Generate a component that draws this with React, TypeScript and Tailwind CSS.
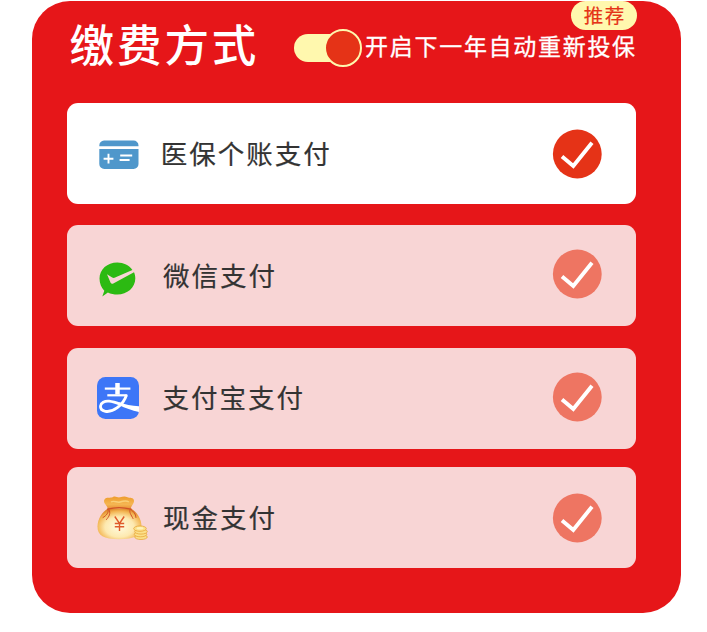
import React, { useState } from 'react';

interface PayMethod {
  id: string;
  label: string;
  icon: React.ReactNode;
  // Feinabstände je Zeile
  rowClass: string;
  iconClass: string;
  labelClass: string;
  checkClass: string;
}

const InsuranceCardIcon = () => (
  <svg width="40" height="29" viewBox="0 0 40 29">
    <path d="M5 0.5h29.5a5 5 0 0 1 5 5V6.2H0.3V5.5a5 5 0 0 1 4.7-5z" fill="#4f97cb" />
    <path d="M0.3 9h39.2v14.900a5 5 0 0 1-5 5H5.3a5 5 0 0 1-5-5z" fill="#4f97cb" />
    <path d="M4.6 18.700h9.800M9.500 13.800v9.800" stroke="#fff" strokeWidth="1.900" />
    <path d="M21.200 15.500h12M20.600 20h10" stroke="#fff" strokeWidth="2.100" />
  </svg>
);

const WechatPayIcon = () => (
  <svg width="37" height="35" viewBox="0 0 37 35">
    <path
      d="M18.300 0.500C8.300 0.500 0.500 7.400 0.500 16.500c0 5 2 9.300 4.800 12.200L3.300 34.500l5.600-4c2.600 1.400 6.400 2 9.400 2 10 0 18-7 18-16 0-2.300-.4-4.400-1.300-6.300L14.300 21.500c-1.200.7-2.200.2-2.700-.8L8 12.300l5.200 3.200c1 .6 1.900.6 2.900.1L33.400 7.900C30.200 3.400 24.700.5 18.300.5z"
      fill="#2cba12"
    />
  </svg>
);

const AlipayIcon = () => (
  <svg width="42" height="42" viewBox="0 0 42 42">
    <rect width="42" height="42" rx="8.500" fill="#3d76f7" />
    <g fill="none" stroke="#fff">
      <path d="M20.500 6v11.500" strokeWidth="4.500" />
      <path d="M7.800 11.600h25.600" strokeWidth="2.200" />
      <path d="M10.300 18.300h20" strokeWidth="2.200" />
      <path
        d="M29.500 18c-1.600 5-5 9.600-9.200 12.700-4 3-8.300 4.300-12 3.600-3.400-.7-5-2.900-4.800-5.300.3-3.200 4-5.200 8.600-4.800 4 .4 7.500 1.700 12 3.400"
        strokeWidth="2.800"
      />
    </g>
    <path d="M22 25.200c6 2.300 12.500 3.600 20 4v5.800c-7-1.400-14-4-20-7z" fill="#fff" />
  </svg>
);

const MoneyBagIcon = () => (
  <svg width="51" height="44" viewBox="0 0 51 44">
    <defs>
      <radialGradient id="bag" cx="0.500" cy="0.600" r="0.600">
        <stop offset="0" stopColor="#fffbdf" />
        <stop offset="0.550" stopColor="#fde9b0" />
        <stop offset="0.850" stopColor="#f3b653" />
        <stop offset="1" stopColor="#e08a2c" />
      </radialGradient>
      <linearGradient id="bagTop" x1="0" y1="0" x2="0" y2="1">
        <stop offset="0" stopColor="#ee9c2c" />
        <stop offset="0.600" stopColor="#f5b653" />
        <stop offset="1" stopColor="#e68a30" />
      </linearGradient>
    </defs>
    <path
      d="M11 12.500C5 16 0.500 23 0.500 30.500c0 9 6 12.800 21.500 12.800s22.500-3.800 22.500-12.800C44.500 23 40 16 34 12.500z"
      fill="url(#bag)"
    />
    <path
      d="M11 13.500C10.500 9 5.500 7 7.500 3.500c2-3 6-1 8.500-2.500 2.500-1.500 4.500 1 7 .3C26 .5 28 0 30.500 1.300c2 1 4.500-.2 6 2 2 3-2.500 6-3 10.200-7-1.500-15.500-1.500-22.500 0z"
      fill="url(#bagTop)"
    />
    <path d="M14 6c3-2 6 1 9 0s6-2 9 0" fill="none" stroke="#f9cf78" strokeWidth="1.500" />
    <g fill="none" stroke="#cf5227" strokeLinecap="round">
      <path d="M10.500 13.200c7-2 16-2 23.500 0" strokeWidth="1.200" />
      <path d="M11 13.500c1 3-1.500 6-5 8M12 13.500c2 4 0 7-2.500 10M33 13.500c-1 3 1 5 3 9M34 13.500c2 2 5 4 5 8" strokeWidth="1" />
    </g>
    <path d="M17.800 20.500l4.700 7 4.700-7M22.500 27v8M17.800 27.500h9.400M17.800 30.800h9.400" fill="none" stroke="#df5a2a" strokeWidth="1.400" />
    <g fill="#fbe08a" stroke="#e9a83c" strokeWidth="0.800">
      <ellipse cx="44" cy="41" rx="6.300" ry="2.500" />
      <ellipse cx="43.500" cy="38.300" rx="6.300" ry="2.500" />
      <ellipse cx="44" cy="35.600" rx="6.300" ry="2.500" />
      <ellipse cx="43" cy="32.600" rx="6.300" ry="2.700" />
    </g>
    <ellipse cx="43" cy="32.300" rx="3.500" ry="1.200" fill="#fff3ba" />
  </svg>
);

const methods: PayMethod[] = [
  {
    id: 'insurance',
    label: '医保个账支付',
    icon: <InsuranceCardIcon />,
    rowClass: '',
    iconClass: 'pl-[32px] pt-[2.500px]',
    labelClass: 'pl-[94px]',
    checkClass: 'pt-px',
  },
  {
    id: 'wechat',
    label: '微信支付',
    icon: <WechatPayIcon />,
    rowClass: 'mt-[21.100px]',
    iconClass: 'pl-[32.200px] pt-[8px]',
    labelClass: 'pl-[96.200px] pb-[2px]',
    checkClass: 'pb-[3px]',
  },
  {
    id: 'alipay',
    label: '支付宝支付',
    icon: <AlipayIcon />,
    rowClass: 'mt-[21.300px]',
    iconClass: 'pl-[30.300px]',
    labelClass: 'pl-[95.700px] pb-[2px]',
    checkClass: 'pb-[3px]',
  },
  {
    id: 'cash',
    label: '现金支付',
    icon: <MoneyBagIcon />,
    rowClass: 'mt-[18.200px]',
    iconClass: 'pl-[30.300px]',
    labelClass: 'pl-[96.200px] pb-[2px]',
    checkClass: 'pt-px',
  },
];

const CheckMark = ({ active }: { active: boolean }) => (
  <svg width="50" height="50" viewBox="0 0 50 50">
    <circle cx="25.300" cy="25" r="24.400" fill={active ? '#e53317' : '#ee7562'} />
    <path d="M10 27.500l11.300 9.500L40 13.700" fill="none" stroke="#fff" strokeWidth="3.900" />
  </svg>
);

const App: React.FC = () => {
  const [selected, setSelected] = useState('insurance');
  const [autoRenew, setAutoRenew] = useState(true);

  return (
    <div className="h-[632px] w-[707px] overflow-hidden bg-white pl-[32.400px] pt-[0.500px] font-['Noto_Sans_CJK_SC',sans-serif]">
      <div className="h-[612.700px] w-[649px] rounded-[38px] bg-[#e61619] px-[34.400px]">
        {/* Kopfzeile */}
        <div className="flex h-[102.200px]">
          <h1 className="w-[227px] shrink-0 whitespace-nowrap pl-[2.800px] pt-[12.600px] text-[44.500px] font-medium leading-[60px] tracking-[2.900px] text-white">
            缴费方式
          </h1>
          <button
            className="mt-[28px] flex h-[38px] w-[68.500px] shrink-0 items-center"
            onClick={() => setAutoRenew(!autoRenew)}
          >
            <span className={`flex h-[28px] w-[62px] items-center rounded-full bg-[#fff8ae] ${autoRenew ? 'pl-[30.500px]' : ''}`}>
              <span className="h-[38px] w-[38px] shrink-0 rounded-full border-2 border-[#fff8ae] bg-[#e53317]" />
            </span>
          </button>
          <div className="relative shrink-0 whitespace-nowrap pl-[2.800px] pt-[28px] text-[23px] leading-[32px] tracking-[1.700px] text-white [-webkit-text-stroke:0.300px_white]">
            开启下一年自动重新投保
            <span className="absolute left-[209px] top-[0.500px] flex h-[29px] w-[66px] items-center justify-center rounded-full bg-[#fff8ae] pb-[2px] pl-px text-[19.500px] leading-none tracking-[1.500px] text-[#e53317] [-webkit-text-stroke:0.200px_#e53317]">
              推荐
            </span>
          </div>
        </div>

        {/* Zahlungsarten */}
        <div className="flex w-[569.600px] flex-col">
          {methods.map((m) => (
            <button
              key={m.id}
              onClick={() => setSelected(m.id)}
              className={`grid h-[101.300px] items-center rounded-[11px] text-left ${m.rowClass} ${
                selected === m.id ? 'bg-white' : 'bg-[#f8d5d5]'
              }`}
            >
              <span className={`col-start-1 row-start-1 ${m.iconClass}`}>{m.icon}</span>
              <span className={`col-start-1 row-start-1 text-[26.500px] leading-[36px] tracking-[2px] text-[#333] [-webkit-text-stroke:0.200px_#333] ${m.labelClass}`}>
                {m.label}
              </span>
              <span className={`col-start-1 row-start-1 justify-self-end pr-[34px] ${m.checkClass}`}>
                <CheckMark active={selected === m.id} />
              </span>
            </button>
          ))}
        </div>
      </div>
    </div>
  );
};

export default App;
